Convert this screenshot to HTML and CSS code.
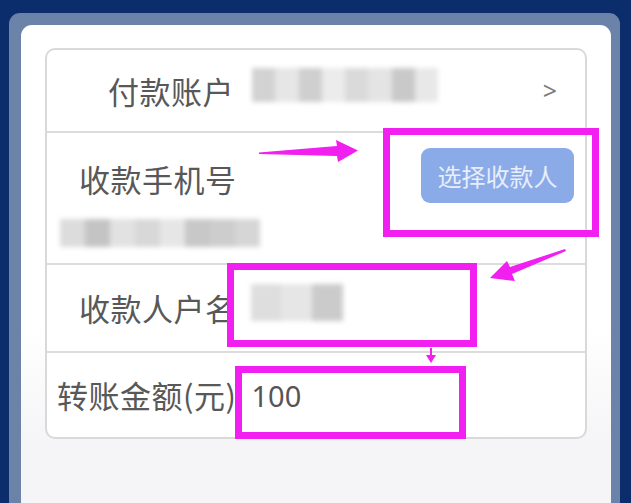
FILE: index.html
```html
<!DOCTYPE html>
<html>
<head>
	<title>转账</title>
	<link rel="stylesheet" href="styles.css">
</head>
<body>
	<div class="frame">
		<div class="card">
			<div class="form">
				<div class="row row-pay">
					<span class="label">付款账户</span>
					<span class="mosaic mosaic-account">
						<i style="background:#d2d2d2"></i><i style="background:#e6e6e6"></i><i style="background:#cfcfcf"></i><i style="background:#ececec"></i><i style="background:#dadada"></i><i style="background:#e4e4e4"></i><i style="background:#c9c9c9"></i><i style="background:#e8e8e8"></i>
					</span>
					<span class="chevron">&gt;</span>
				</div>
				<div class="row row-phone">
					<div class="phone-top">
						<span class="label">收款手机号</span>
						<button class="pick">选择收款人</button>
					</div>
					<span class="mosaic mosaic-phone">
						<i style="background:#dcdcdc"></i><i style="background:#c4c4c4"></i><i style="background:#e2e2e2"></i><i style="background:#d8d8d8"></i><i style="background:#e6e6e6"></i><i style="background:#c8c8c8"></i><i style="background:#cdcdcd"></i><i style="background:#d6d6d6"></i>
					</span>
				</div>
				<div class="row row-name">
					<span class="label">收款人户名</span>
					<span class="mosaic mosaic-name">
						<i style="background:#dedede"></i><i style="background:#e6e6e6"></i><i style="background:#cbcbcb"></i>
					</span>
				</div>
				<div class="row row-amount">
					<span class="label">转账金额(元)</span>
					<span class="amount">100</span>
				</div>
			</div>
		</div>
	</div>

	<svg class="marks" width="631" height="503" viewBox="0 0 631 503">
		<g fill="none" stroke="#f11ff0" stroke-width="7">
			<rect x="386.5" y="131.5" width="209" height="102"/>
			<rect x="230.5" y="266.5" width="243" height="77"/>
			<rect x="238.5" y="369.5" width="224" height="66"/>
		</g>
		<g fill="#f11ff0">
			<polygon points="259,152.5 337,146 336,140 358,150.5 338,162 337,156 259,154"/>
			<polygon points="565,249 510,267 507,261 490,278 515,281 512,274 566,251"/>
			<rect x="430" y="348" width="2" height="8"/>
			<polygon points="426,355 436,355 431,363"/>
		</g>
	</svg>
</body>
</html>
```

FILE: styles.css
```css
body{
  margin:0;
  height:503px;
  overflow:hidden;
  background-color:#0b2d6c;
  font-family:"Noto Sans CJK SC","Noto Sans",sans-serif;
}
.frame{
  margin:13px 11px 0 9px;
  padding:12px 9px 0 12px;
  height:478px;
  background-color:#6c83a9;
  border-radius:11px 11px 0 0;
}
.card{
  height:100%;
  padding:23px 24px 0 24px;
  box-sizing:border-box;
  border-radius:11px 11px 0 0;
  background:linear-gradient(#ffffff 0, #ffffff 300px, #f5f5f7 420px);
}
.form{
  border:2px solid #d9d9d9;
  border-radius:10px;
  background-color:#fff;
  overflow:hidden;
}
.row{
  display:flex;
  align-items:center;
  box-sizing:border-box;
  border-top:2px solid #dcdcdc;
}
.label{
  font-size:31px;
  line-height:36px;
  letter-spacing:0.5px;
  color:#585858;
  white-space:nowrap;
}
.mosaic{
  display:flex;
  filter:blur(2.5px);
}
.mosaic i{
  flex:1;
}
.row-pay{
  border-top:none;
  height:81px;
  padding:0 28px 0 61px;
}
.mosaic-account{
  width:186px;
  height:34px;
  margin:-12px 0 0 18px;
  border-radius:14px 0 0 14px;
}
.chevron{
  margin:-2px 0 0 auto;
  font-family:"Noto Sans",sans-serif;
  font-size:25px;
  color:#7c7c7c;
}
.row-phone{
  display:block;
  height:132px;
  padding:15px 11px 0 13px;
}
.phone-top{
  display:flex;
  justify-content:space-between;
  align-items:center;
}
.phone-top .label{
  margin:6px 0 0 19px;
}
.pick{
  width:153px;
  height:55px;
  border:none;
  border-radius:9px;
  background-color:#8aabe8;
  color:#e8eefa;
  font-family:"Noto Sans CJK SC",sans-serif;
  font-size:24px;
}
.mosaic-phone{
  width:200px;
  height:28px;
  margin-top:16px;
  border-radius:8px 0 0 8px;
}
.row-name{
  height:88px;
  padding-left:32px;
}
.mosaic-name{
  width:92px;
  height:37px;
  margin:-12px 0 0 14px;
  border-radius:12px;
}
.row-amount{
  height:86px;
  padding-left:10px;
}
.amount{
  margin-left:15px;
  font-size:29px;
  color:#555;
  font-family:"Noto Sans",sans-serif;
}
.marks{
  position:absolute;
  left:0;
  top:0;
}
```
